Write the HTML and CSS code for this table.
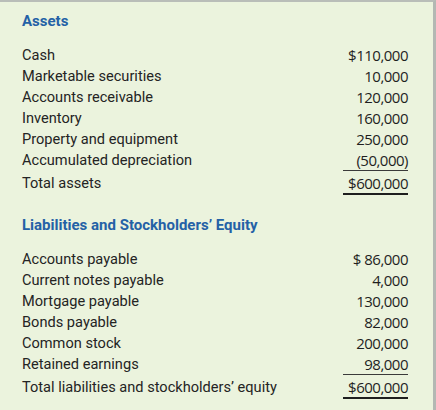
FILE: index.html
```html
<!DOCTYPE html>
<html>
<head>
<meta charset="utf-8">
<link rel="stylesheet" href="styles.css">
</head>
<body>
<div class="sheet">
  <h2 class="heading">Assets</h2>
  <div class="table">
    <div class="label">Cash</div><div class="amt">$110,000</div>
    <div class="label">Marketable securities</div><div class="amt">10,000</div>
    <div class="label">Accounts receivable</div><div class="amt">120,000</div>
    <div class="label">Inventory</div><div class="amt">160,000</div>
    <div class="label">Property and equipment</div><div class="amt">250,000</div>
    <div class="label">Accumulated depreciation</div><div class="amt under">(50,000)</div>
    <div class="label total">Total assets</div><div class="amt total double">$600,000</div>
  </div>
  <h2 class="heading second">Liabilities and Stockholders’ Equity</h2>
  <div class="table">
    <div class="label">Accounts payable</div><div class="amt">$ 86,000</div>
    <div class="label">Current notes payable</div><div class="amt">4,000</div>
    <div class="label">Mortgage payable</div><div class="amt">130,000</div>
    <div class="label">Bonds payable</div><div class="amt">82,000</div>
    <div class="label">Common stock</div><div class="amt">200,000</div>
    <div class="label">Retained earnings</div><div class="amt under">98,000</div>
    <div class="label total">Total liabilities and stockholders’ equity</div><div class="amt total double">$600,000</div>
  </div>
</div>
</body>
</html>
```
FILE: styles.css
```css
html, body {
  margin: 0;
  padding: 0;
}
body {
  width: 436px;
  height: 410px;
  background: #ebf3dd;
  overflow: hidden;
}
.sheet {
  box-sizing: border-box;
  width: 436px;
  height: 410px;
  border-top: 2px solid #b9bdb8;
  border-right: 3px solid #b3b8b3;
  padding: 10px 25px 0 22px;
  color: #242424;
}
.heading {
  margin: 0;
  font-family: Roboto, "Noto Sans", sans-serif;
  font-weight: 700;
  font-size: 15px;
  line-height: 18px;
  color: #2461a6;
}
.heading.second {
  margin-top: 21px;
}
.table {
  display: grid;
  grid-template-columns: 1fr 65px;
  margin-top: 15px;
}
.label {
  font-family: Roboto, "Noto Sans", sans-serif;
  font-size: 14.6px;
  line-height: 21px;
}
.amt {
  font-family: "Open Sans", "Noto Sans", sans-serif;
  font-size: 15px;
  line-height: 21px;
  text-align: right;
  letter-spacing: -0.5px;
  color: #1f1f1f;
}
.under {
  border-bottom: 1px solid #3a3a3a;
  line-height: 20px;
}
.total {
  padding-top: 2px;
}
.double {
  border-bottom: 2px solid #1e1e1e;
  line-height: 20px;
}
```
